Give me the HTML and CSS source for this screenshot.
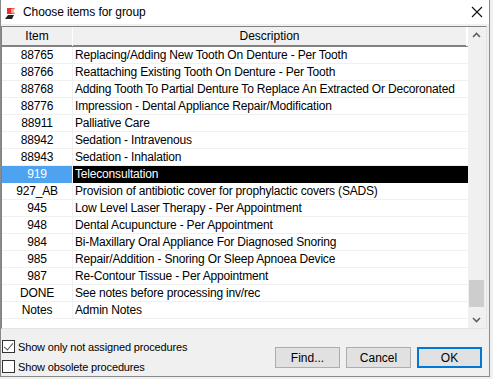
FILE: index.html
```html
<!DOCTYPE html>
<html lang="en">
<head>
  <meta charset="UTF-8" />
  <title>Choose items for group</title>
  <link rel="stylesheet" href="styles.css">
</head>
<body>
  <div class="window">
    <div class="titlebar">
      <svg class="app-icon" width="16" height="16" viewBox="0 0 16 16">
        <polygon points="5,4 13,4 11,7 13,10 5,10" fill="#e8302a" />
        <polygon points="9,5 13,4 11,7 13,10 9,9" fill="#f6a39c" />
        <polygon points="3,15 6,11 12,11 10,15" fill="#222" />
      </svg>
      <span class="title">Choose items for group</span>
      <svg class="close" width="12" height="12" viewBox="0 0 12 12">
        <path d="M1 1 L11 11 M11 1 L1 11" stroke="#111" stroke-width="1.1" />
      </svg>
    </div>

    <div class="body">
      <div class="listbox">
        <div class="list">
          <div class="list-header">
            <div class="hcell">Item</div>
            <div class="hcell">Description</div>
          </div>
          <div class="row"><div class="code">88765</div><div class="desc">Replacing/Adding New Tooth On Denture - Per Tooth</div></div>
          <div class="row"><div class="code">88766</div><div class="desc">Reattaching Existing Tooth On Denture - Per Tooth</div></div>
          <div class="row"><div class="code">88768</div><div class="desc">Adding Tooth To Partial Denture To Replace An Extracted Or Decoronated</div></div>
          <div class="row"><div class="code">88776</div><div class="desc">Impression - Dental Appliance Repair/Modification</div></div>
          <div class="row"><div class="code">88911</div><div class="desc">Palliative Care</div></div>
          <div class="row"><div class="code">88942</div><div class="desc">Sedation - Intravenous</div></div>
          <div class="row"><div class="code">88943</div><div class="desc">Sedation - Inhalation</div></div>
          <div class="row selected"><div class="code">919</div><div class="desc">Teleconsultation</div></div>
          <div class="row"><div class="code">927_AB</div><div class="desc">Provision of antibiotic cover for prophylactic covers (SADS)</div></div>
          <div class="row"><div class="code">945</div><div class="desc">Low Level Laser Therapy - Per Appointment</div></div>
          <div class="row"><div class="code">948</div><div class="desc">Dental Acupuncture - Per Appointment</div></div>
          <div class="row"><div class="code">984</div><div class="desc">Bi-Maxillary Oral Appliance For Diagnosed Snoring</div></div>
          <div class="row"><div class="code">985</div><div class="desc">Repair/Addition - Snoring Or Sleep Apnoea Device</div></div>
          <div class="row"><div class="code">987</div><div class="desc">Re-Contour Tissue - Per Appointment</div></div>
          <div class="row"><div class="code">DONE</div><div class="desc">See notes before processing inv/rec</div></div>
          <div class="row"><div class="code">Notes</div><div class="desc">Admin Notes</div></div>
        </div>
        <div class="scrollbar">
          <svg class="arrow" width="17" height="17" viewBox="0 0 17 17">
            <path d="M5 10 L8.5 6.5 L12 10" stroke="#606060" stroke-width="1.6" fill="none" />
          </svg>
          <div class="track">
            <div class="thumb"></div>
          </div>
          <svg class="arrow" width="17" height="17" viewBox="0 0 17 17">
            <path d="M5 7 L8.5 10.5 L12 7" stroke="#606060" stroke-width="1.6" fill="none" />
          </svg>
        </div>
      </div>

      <div class="footer">
        <div class="options">
          <label class="check"><span class="box checked"></span>Show only not assigned procedures</label>
          <label class="check"><span class="box"></span>Show obsolete procedures</label>
        </div>
        <div class="buttons">
          <button class="btn">Find...</button>
          <button class="btn">Cancel</button>
          <button class="btn default">OK</button>
        </div>
      </div>
    </div>
  </div>
</body>
</html>
```

FILE: styles.css
```css
* { margin: 0; padding: 0; box-sizing: border-box; }
html, body {
  width: 493px;
  height: 379px;
  background: #f0f0f0;
  font-family: 'Liberation Sans', Arial, sans-serif;
  font-size: 12px;
  color: #000;
  overflow: hidden;
}
.window {
  width: 490px;
  height: 377px;
  background: #f0f0f0;
  border: 1px solid #8a8a8a;
  border-top: none;
  display: flex;
  flex-direction: column;
}
.titlebar {
  height: 24px;
  background: #fff;
  display: flex;
  align-items: center;
  padding-left: 1px;
  flex-shrink: 0;
}
.app-icon { margin-right: 5px; }
.title {
  flex: 1;
  font-size: 12px;
  letter-spacing: -0.1px;
}
.close { margin-right: 6px; }

.body {
  flex: 1;
  display: flex;
  flex-direction: column;
  padding-top: 2px;
}
.listbox {
  height: 303px;
  width: 486px;
  display: flex;
  background: #fff;
  border-top: 1px solid #828282;
  border-left: 1px solid #828282;
  border-right: 1px solid #e3e3e3;
  border-bottom: 1px solid #e3e3e3;
}
.list {
  flex: 1;
  overflow: hidden;
  background: #fff;
}
.list-header {
  display: grid;
  grid-template-columns: 71px 1fr;
  height: 20px;
  background: #f0f0f0;
  border-bottom: 2px solid #828282;
  border-right: 1px solid #fff;
}
.hcell {
  text-align: center;
  line-height: 19px;
  border-right: 1px solid #fff;
}
.row {
  display: grid;
  grid-template-columns: 71px 1fr;
  height: 17px;
  border-bottom: 1px solid #f0f0f0;
  line-height: 17px;
  white-space: nowrap;
  letter-spacing: -0.18px;
}
.code {
  text-align: center;
  border-right: 1px solid #f0f0f0;
}
.desc {
  padding-left: 2px;
  overflow: hidden;
}
.row.selected .code {
  background: #4ea3f0;
  color: #fff;
}
.row.selected .desc {
  background: #000;
  color: #fff;
}
.scrollbar {
  width: 17px;
  background: #f0f0f0;
  display: flex;
  flex-direction: column;
  border-right: 1px solid #f0f0f0;
  box-sizing: content-box;
}
.arrow { display: block; flex-shrink: 0; }
.track {
  flex: 1;
  position: relative;
}
.thumb {
  position: absolute;
  left: 1px;
  right: 1px;
  bottom: 4px;
  height: 27px;
  background: #cdcdcd;
}

.footer {
  flex: 1;
  display: flex;
  align-items: flex-end;
  justify-content: space-between;
  padding-bottom: 3px;
}
.options {
  display: flex;
  flex-direction: column;
  gap: 7px;
  padding-left: 1px;
}
.check {
  display: flex;
  align-items: center;
  gap: 3px;
  height: 13px;
  font-size: 11px;
  letter-spacing: -0.15px;
}
.box {
  width: 13px;
  height: 13px;
  border: 1px solid #333;
  background: #fff;
  position: relative;
}
.box.checked::after {
  content: '';
  position: absolute;
  left: 3px;
  top: 0px;
  width: 4px;
  height: 8px;
  border-right: 1.5px solid #555;
  border-bottom: 1.5px solid #555;
  transform: rotate(40deg);
}
.buttons {
  display: flex;
  gap: 6px;
  margin-right: 7px;
  margin-bottom: 5px;
}
.btn {
  width: 65px;
  height: 21px;
  background: #e1e1e1;
  border: 1px solid #adadad;
  font-family: 'Liberation Sans', Arial, sans-serif;
  font-size: 12px;
  color: #000;
}
.btn.default {
  border: 2px solid #0078d7;
}
```
